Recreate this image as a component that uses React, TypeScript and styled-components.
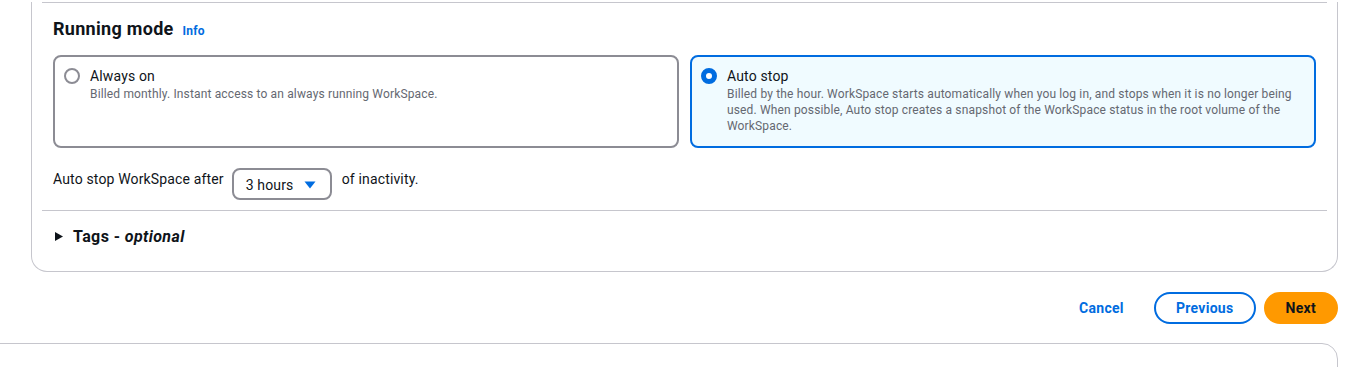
import styled, { createGlobalStyle } from 'styled-components';

const GlobalStyle = createGlobalStyle`
  body {
    margin: 0;
    background: #ffffff;
    font-family: Roboto, 'Noto Sans', sans-serif;
    color: #0f141a;
    letter-spacing: 0.15px;
    overflow: hidden;
  }
`;

const Page = styled.div`
  width: 1352px;
  height: 367px;
  overflow: hidden;
`;

const Card = styled.div`
  margin-left: 31px;
  width: 1307px;
  box-sizing: border-box;
  border: 1px solid #c6c6cd;
  border-top: none;
  border-radius: 0 0 16px 16px;
  padding: 0 10px;
`;

const Divider = styled.div<{ $top?: number }>`
  height: 1px;
  background: #c6c6cd;
  margin-top: ${({ $top }) => $top ?? 0}px;
`;

const Section = styled.div`
  padding: 15px 11px 10px;
`;

const Heading = styled.h2`
  margin: 0;
  display: flex;
  align-items: baseline;
  gap: 9px;
  font-size: 18px;
  line-height: 22px;
  font-weight: 700;
  letter-spacing: 0.3px;
`;

const InfoLink = styled.a`
  font-size: 12px;
  font-weight: 700;
  color: #006ce0;
  text-decoration: none;
  letter-spacing: 0.2px;
`;

const Tiles = styled.div`
  display: grid;
  grid-template-columns: 1fr 1fr;
  gap: 11px;
  margin-top: 13px;
`;

const Tile = styled.label<{ $selected?: boolean }>`
  display: flex;
  gap: 10px;
  min-height: 93px;
  box-sizing: border-box;
  padding: 9px 14px 10px 9px;
  border: 2px solid ${({ $selected }) => ($selected ? '#006ce0' : '#8c8c94')};
  background: ${({ $selected }) => ($selected ? '#f0fbff' : '#ffffff')};
  border-radius: 8px;
  cursor: pointer;
`;

const Radio = styled.span<{ $checked?: boolean }>`
  flex: none;
  width: 16px;
  height: 16px;
  margin-top: 2px;
  box-sizing: border-box;
  border-radius: 50%;
  border: ${({ $checked }) => ($checked ? '5px solid #006ce0' : '2px solid #8c8c94')};
  background: #ffffff;
`;

const TileText = styled.div`
  display: flex;
  flex-direction: column;
`;

const TileLabel = styled.span`
  font-size: 14px;
  line-height: 20px;
`;

const TileDescription = styled.span`
  font-size: 12px;
  line-height: 16px;
  color: #656871;
`;

const InlineRow = styled.div`
  display: flex;
  align-items: flex-start;
  margin-top: 20px;
  font-size: 14px;
  line-height: 20px;
`;

const InlineText = styled.span`
  padding-top: 1px;
`;

const SelectBox = styled.button`
  display: flex;
  align-items: center;
  width: 100px;
  height: 32px;
  margin: 0 10px 0 8px;
  padding: 2px 14px 0 12px;
  box-sizing: border-box;
  border: 2px solid #8c8c94;
  border-radius: 8px;
  background: #ffffff;
  font-family: inherit;
  font-size: 14px;
  letter-spacing: inherit;
  white-space: nowrap;
  color: #0f141a;
`;

const Caret = styled.svg`
  margin-left: auto;
`;

const Expander = styled.div`
  display: flex;
  align-items: center;
  gap: 10px;
  padding: 16px 13px 25px;
  font-size: 16px;
  font-weight: 700;
  letter-spacing: 0.4px;

  em {
    font-style: italic;
  }
`;

const Actions = styled.div`
  display: flex;
  justify-content: flex-end;
  align-items: center;
  gap: 8px;
  width: 1338px;
  margin-top: 20px;
`;

const Button = styled.button<{ $variant: 'link' | 'normal' | 'primary' }>`
  height: 32px;
  box-sizing: border-box;
  border-radius: 20px;
  font-family: inherit;
  font-size: 14px;
  font-weight: 700;
  letter-spacing: 0.3px;
  cursor: pointer;
  padding: 0 20px;
  border: 2px solid
    ${({ $variant }) => ($variant === 'normal' ? '#006ce0' : $variant === 'primary' ? '#ff9900' : 'transparent')};
  background: ${({ $variant }) => ($variant === 'primary' ? '#ff9900' : '#ffffff')};
  color: ${({ $variant }) => ($variant === 'primary' ? '#0f141a' : '#006ce0')};
`;

const NextCard = styled.div`
  margin: 19px 0 0 -20px;
  width: 1358px;
  height: 60px;
  box-sizing: border-box;
  border: 1px solid #c6c6cd;
  border-radius: 16px;
`;

export default function App() {
  return (
    <Page>
      <GlobalStyle />
      <Card>
        <Divider $top={2} />
        <Section>
          <Heading>
            Running mode <InfoLink href="#">Info</InfoLink>
          </Heading>
          <Tiles>
            <Tile>
              <Radio />
              <TileText>
                <TileLabel>Always on</TileLabel>
                <TileDescription>Billed monthly. Instant access to an always running WorkSpace.</TileDescription>
              </TileText>
            </Tile>
            <Tile $selected>
              <Radio $checked />
              <TileText>
                <TileLabel>Auto stop</TileLabel>
                <TileDescription>
                  Billed by the hour. WorkSpace starts automatically when you log in, and stops when it is no longer
                  being used. When possible, Auto stop creates a snapshot of the WorkSpace status in the root volume of
                  the WorkSpace.
                </TileDescription>
              </TileText>
            </Tile>
          </Tiles>
          <InlineRow>
            <InlineText>Auto stop WorkSpace after</InlineText>
            <SelectBox>
              3 hours
              <Caret width="12" height="8" viewBox="0 0 12 8">
                <path d="M0.5 0.5 H11.5 L6 7.5 Z" fill="#006ce0" />
              </Caret>
            </SelectBox>
            <InlineText>of inactivity.</InlineText>
          </InlineRow>
        </Section>
        <Divider />
        <Expander>
          <svg width="8" height="9" viewBox="0 0 8 9">
            <path d="M0 0 L8 4.5 L0 9 Z" fill="#0f141a" />
          </svg>
          <span>
            Tags - <em>optional</em>
          </span>
        </Expander>
      </Card>
      <Actions>
        <Button $variant="link">Cancel</Button>
        <Button $variant="normal">Previous</Button>
        <Button $variant="primary">Next</Button>
      </Actions>
      <NextCard />
    </Page>
  );
}
